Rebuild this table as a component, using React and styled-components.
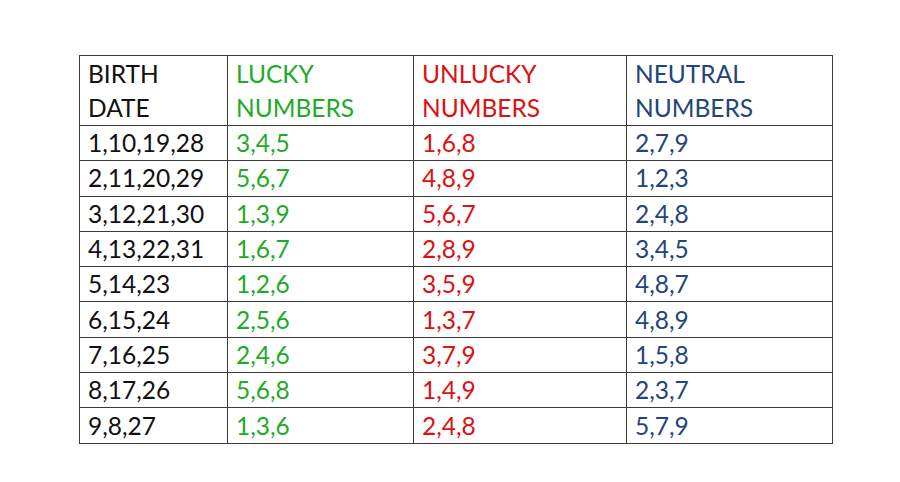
import React from 'react';
import styled, { createGlobalStyle } from 'styled-components';

const GlobalStyle = createGlobalStyle`
  html, body {
    margin: 0;
    background: #ffffff;
  }
`;

const rows = [
  ['1,10,19,28', '3,4,5', '1,6,8', '2,7,9'],
  ['2,11,20,29', '5,6,7', '4,8,9', '1,2,3'],
  ['3,12,21,30', '1,3,9', '5,6,7', '2,4,8'],
  ['4,13,22,31', '1,6,7', '2,8,9', '3,4,5'],
  ['5,14,23', '1,2,6', '3,5,9', '4,8,7'],
  ['6,15,24', '2,5,6', '1,3,7', '4,8,9'],
  ['7,16,25', '2,4,6', '3,7,9', '1,5,8'],
  ['8,17,26', '5,6,8', '1,4,9', '2,3,7'],
  ['9,8,27', '1,3,6', '2,4,8', '5,7,9'],
];

const colors = ['#111111', '#1faa2a', '#dd1111', '#23457a'];
const headers = [
  ['BIRTH', 'DATE'],
  ['LUCKY', 'NUMBERS'],
  ['UNLUCKY', 'NUMBERS'],
  ['NEUTRAL', 'NUMBERS'],
];
const widths = [148, 186, 213, 206];

class App extends React.Component {
  render() {
    return (
      <Page>
        <GlobalStyle />
        <Table>
          <colgroup>
            {widths.map((w, i) => (
              <col key={i} style={{ width: w }} />
            ))}
          </colgroup>
          <thead>
            <HeadRow>
              {headers.map((h, i) => (
                <Cell key={i} $color={colors[i]}>
                  {h[0]}
                  <br />
                  {h[1]}
                </Cell>
              ))}
            </HeadRow>
          </thead>
          <tbody>
            {rows.map((r, ri) => (
              <Row key={ri}>
                {r.map((v, ci) => (
                  <Cell key={ci} $color={colors[ci]}>
                    {v}
                  </Cell>
                ))}
              </Row>
            ))}
          </tbody>
        </Table>
      </Page>
    );
  }
}

const Page = styled.div`
  width: 900px;
  height: 482px;
  padding: 55px 0 0 79px;
  box-sizing: border-box;
  background: #fff;
`;

const Table = styled.table`
  border-collapse: collapse;
  table-layout: fixed;
  width: 753px;
  font-family: Lato, "Liberation Sans", sans-serif;
  font-size: 24.5px;
  border: 1px solid #3c3c3c;
`;

const HeadRow = styled.tr`
  height: 69px;
  td {
    line-height: 34px;
    padding-top: 1px;
  }
`;

const Row = styled.tr`
  height: 35.3px;
`;

const Cell = styled.td`
  border: 1px solid #3c3c3c;
  padding: 0 0 0 8px;
  color: ${(p) => p.$color};
  line-height: 34px;
  vertical-align: middle;
  white-space: nowrap;
  text-align: left;
`;

export default App;
